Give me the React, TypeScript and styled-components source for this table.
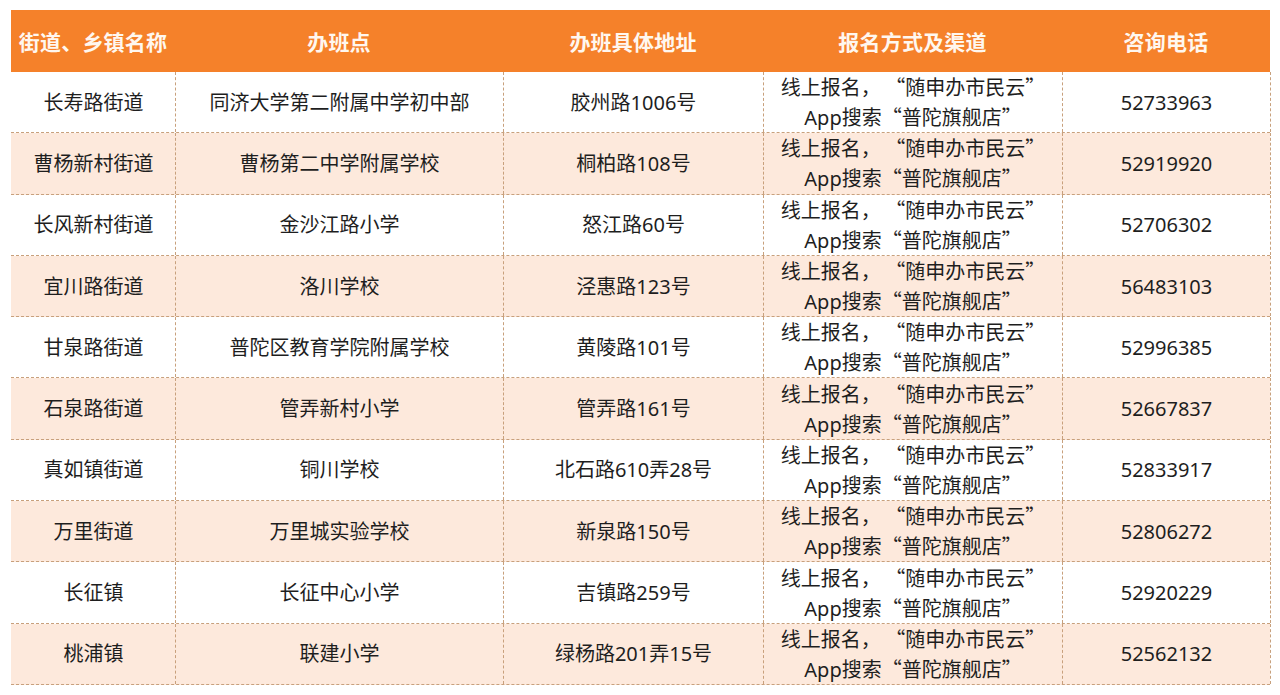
import React from "react";
import styled, { createGlobalStyle } from "styled-components";

const Global = createGlobalStyle`
  html, body { margin: 0; padding: 0; background: #ffffff; }
  body { font-family: "Noto Sans", "Noto Sans CJK SC", sans-serif; color: #1e1e1e; }
`;

const Page = styled.div`
  padding: 10px 10px 0 11px;
  width: 1280px;
  box-sizing: border-box;
`;

const cols = "164px 328px 260px 299px 208px";

const Table = styled.div`
  width: 1259px;
  border-left: 1px dashed #c8a07c;
  box-sizing: border-box;
`;

const HeaderRow = styled.div`
  display: grid;
  grid-template-columns: ${cols};
  height: 62px;
  background: #f5812a;
  margin-left: -1px;
`;

const HeadCell = styled.div`
  display: flex;
  align-items: center;
  justify-content: center;
  color: #fff7ef;
  font-family: "Noto Sans CJK SC", sans-serif;
  font-weight: 700;
  font-size: 21px;
  letter-spacing: 0.2px;
`;

const Row = styled.div<{ $alt: boolean }>`
  display: grid;
  grid-template-columns: ${cols};
  height: 61.3px;
  background: ${(p) => (p.$alt ? "#fde9dc" : "#ffffff")};
  border-bottom: 1px dashed #c8a07c;
  box-sizing: border-box;
  margin-left: -1px;
  padding-left: 1px;
`;

const Cell = styled.div`
  display: flex;
  flex-direction: column;
  align-items: center;
  justify-content: center;
  text-align: center;
  font-size: 20px;
  line-height: 29px;
  border-right: 1px dashed #c8a07c;
  box-sizing: border-box;
  white-space: pre;
`;

const Quote = styled.span`
  font-family: "Noto Sans CJK SC", sans-serif;
`;

const rows: [string, string, string, string][] = [
  ["长寿路街道", "同济大学第二附属中学初中部", "胶州路1006号", "52733963"],
  ["曹杨新村街道", "曹杨第二中学附属学校", "桐柏路108号", "52919920"],
  ["长风新村街道", "金沙江路小学", "怒江路60号", "52706302"],
  ["宜川路街道", "洛川学校", "泾惠路123号", "56483103"],
  ["甘泉路街道", "普陀区教育学院附属学校", "黄陵路101号", "52996385"],
  ["石泉路街道", "管弄新村小学", "管弄路161号", "52667837"],
  ["真如镇街道", "铜川学校", "北石路610弄28号", "52833917"],
  ["万里街道", "万里城实验学校", "新泉路150号", "52806272"],
  ["长征镇", "长征中心小学", "吉镇路259号", "52920229"],
  ["桃浦镇", "联建小学", "绿杨路201弄15号", "52562132"],
];

export default function App() {
  return (
    <Page>
      <Global />
      <Table>
        <HeaderRow>
          <HeadCell>街道、乡镇名称</HeadCell>
          <HeadCell>办班点</HeadCell>
          <HeadCell>办班具体地址</HeadCell>
          <HeadCell>报名方式及渠道</HeadCell>
          <HeadCell>咨询电话</HeadCell>
        </HeaderRow>
        {rows.map((r, i) => (
          <Row key={i} $alt={i % 2 === 1}>
            <Cell>{r[0]}</Cell>
            <Cell>{r[1]}</Cell>
            <Cell>{r[2]}</Cell>
            <Cell>
              <span>
                <Quote>{"线上报名， “"}</Quote>随申办市民云<Quote>”</Quote>
              </span>
              <span>
                App搜索<Quote>“</Quote>普陀旗舰店<Quote>”</Quote>
              </span>
            </Cell>
            <Cell>{r[3]}</Cell>
          </Row>
        ))}
      </Table>
    </Page>
  );
}
